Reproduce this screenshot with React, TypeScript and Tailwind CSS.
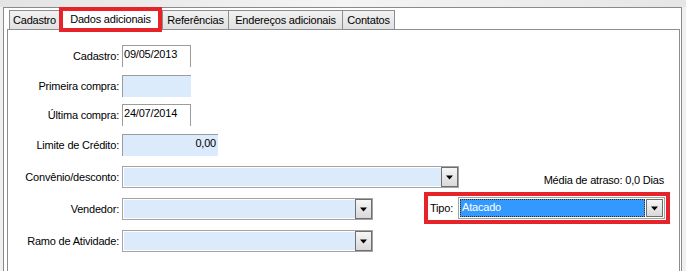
import React from "react";

const tabs = [
  { label: "Cadastro", w: "w-[51px]" },
  { label: "Dados adicionais", w: "w-[103px]", active: true },
  { label: "Referências", w: "w-[67px]" },
  { label: "Endereços adicionais", w: "w-[115px]" },
  { label: "Contatos", w: "w-[53px]" },
];

const Arrow = () => (
  <svg width="9" height="5" viewBox="0 0 9 5">
    <path d="M1 0.5h7L4.5 4.5z" fill="#000" />
  </svg>
);

const DropButton = () => (
  <div className="w-[17px] h-full shrink-0 border border-[#6f6f6f] bg-gradient-to-b from-[#f6f6f6] to-[#d9d9d9] flex items-center justify-center">
    <Arrow />
  </div>
);

const Combo = ({ w }: { w: string }) => (
  <div className={`${w} h-[22px] border border-[#a3a3a3] flex bg-white`}>
    <div className="flex-1 my-[1px] ml-[1px] bg-[#dcebfc]" />
    <DropButton />
  </div>
);

const Label = ({ children }: { children: React.ReactNode }) => (
  <div className="w-[111px] shrink-0 text-right mr-[3px] leading-[13px]">{children}</div>
);

const Field = ({
  value,
  blue,
  w,
  right,
}: {
  value?: string;
  blue?: boolean;
  w: string;
  right?: boolean;
}) => (
  <div
    className={`${w} h-[22px] border-t border-l border-[#9c9c9c] ${
      blue ? "bg-[#dcebfc]" : "bg-white border-r"
    } pt-[2px] px-[1px] leading-[13px] ${right ? "text-right pr-[2px]" : ""}`}
  >
    {value}
  </div>
);

export default function App() {
  return (
    <div className="w-[686px] h-[271px] overflow-hidden bg-[#f0f0f0] font-['Liberation_Sans',Arial,sans-serif] text-[11px] tracking-[-0.2px] text-black">
      <div className="h-[7px] bg-gradient-to-r from-[#e4e4e4] via-[#f4f4f4] to-[#e6e6e6]" />
      <div className="ml-[3px] w-[679px] h-[264px] border border-b-0 border-[#8a8a8a] bg-white">
        {/* tab strip */}
        <div className="flex items-end h-[21px] pl-[5px]">
          {tabs.map((t) =>
            t.active ? (
              <div
                key={t.label}
                className={`${t.w} relative z-10 -mb-[3px] h-[25px] border-[4px] border-[#e52329] bg-white flex items-start justify-center pt-[2px] leading-[13px]`}
              >
                {t.label}
              </div>
            ) : (
              <div
                key={t.label}
                className={`${t.w} h-[19px] border border-b-0 border-[#8c8d8e] -mr-[1px] bg-gradient-to-b from-[#f2f2f2] to-[#e0e0e0] flex items-center justify-center leading-[13px] pt-[1px]`}
              >
                {t.label}
              </div>
            )
          )}
        </div>

        {/* panel */}
        <div className="ml-[3px] w-[673px] h-[243px] border border-b-0 border-[#8c8d8e] flex flex-col">
          <div className="flex items-center mt-[15px]">
            <Label>Cadastro:</Label>
            <Field w="w-[69px]" value="09/05/2013" />
          </div>
          <div className="flex items-center mt-[8px]">
            <Label>Primeira compra:</Label>
            <Field w="w-[69px]" blue />
          </div>
          <div className="flex items-center mt-[7px]">
            <Label>Última compra:</Label>
            <Field w="w-[69px]" value="24/07/2014" />
          </div>
          <div className="flex items-center mt-[8px]">
            <Label>Limite de Crédito:</Label>
            <Field w="w-[96px]" value="0,00" blue right />
          </div>
          <div className="flex items-center mt-[10px]">
            <Label>Convênio/desconto:</Label>
            <Combo w="w-[337px]" />
            <div className="ml-auto mr-[15px] self-end mb-[1px] leading-[13px]">
              Média de atraso: 0,0 Dias
            </div>
          </div>
          <div className="flex items-center mt-[10px]">
            <Label>Vendedor:</Label>
            <Combo w="w-[251px]" />
            <div className="ml-[51px] w-[246px] h-[32px] -mt-[6px] -mb-[4px] border-[4px] border-[#e52329] flex items-center pl-[2px] pr-[1px]">
              <span className="leading-[13px]">Tipo:</span>
              <div className="ml-auto w-[207px] h-[22px] border border-[#a3a3a3] bg-white p-[1px] flex">
                <div className="flex-1 mr-[1px] bg-[#3399ff] border border-dotted border-[#3a2a10] text-white leading-[13px] pl-[1px] pt-[1px]">
                  Atacado
                </div>
                <DropButton />
              </div>
            </div>
          </div>
          <div className="flex items-center mt-[10px]">
            <Label>Ramo de Atividade:</Label>
            <Combo w="w-[251px]" />
          </div>
        </div>
      </div>
    </div>
  );
}
